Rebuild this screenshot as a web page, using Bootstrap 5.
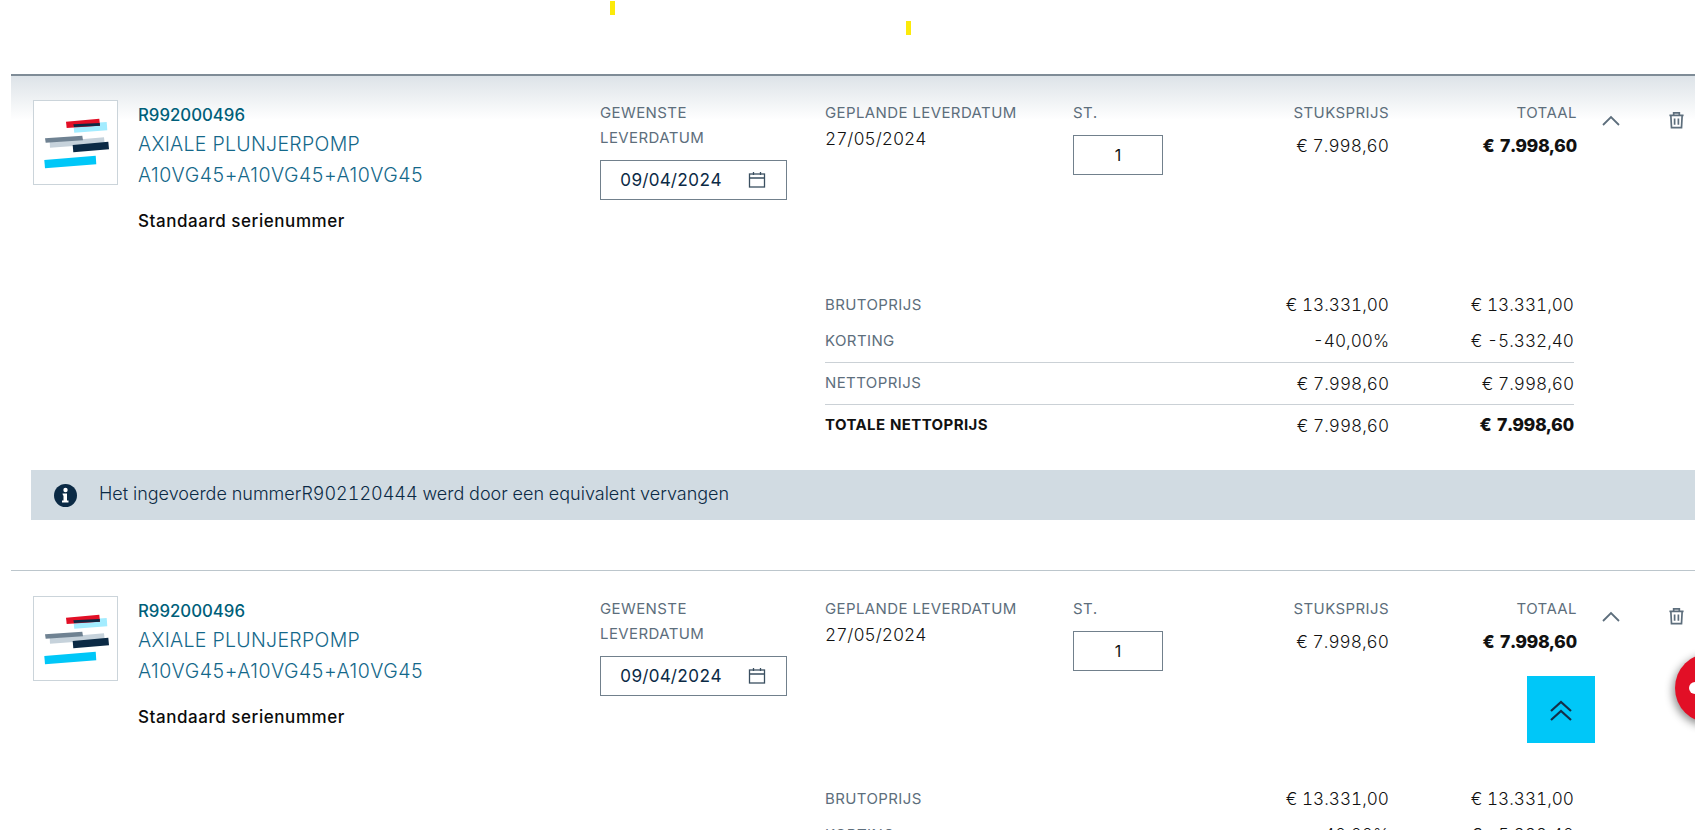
<!DOCTYPE html>
<html lang="nl">
<head>
<meta charset="utf-8">
<title>Winkelwagen</title>
<link href="https://cdn.jsdelivr.net/npm/bootstrap@5.3.0/dist/css/bootstrap.min.css" rel="stylesheet">
<style>
html,body{height:830px;overflow:hidden;background:#fff}
body{font-family:Inter,"Noto Sans",sans-serif;color:#111;font-size:16px;font-variant-numeric:tabular-nums}
.topstrip{height:74px;align-items:flex-start}
.ymark{width:5px;height:14px;background:#fcea0a;flex:none}
.ymark-a{margin-left:610px;margin-top:1px}
.ymark-b{margin-left:291px;margin-top:21px}
.order-item{margin-left:11px;height:496px;border-top:1px solid #bcc6cc}
.order-item.first{border-top:2px solid #7f8c97;background:linear-gradient(#dde3e8,#fff 44px) no-repeat}
.item-top{height:210px;padding-top:25px}
.order-item.first .item-top{height:211px;padding-top:24px}
.thumb{width:85px;height:85px;margin-left:22px;border:1px solid #cbd4da;background:#fff;flex:none}
.thumb svg{display:block;width:100%;height:100%}
.info-col{width:462px;margin-left:20px;flex:none;padding-top:2px}
.pnr{font-size:16.8px;font-weight:500;color:#005f7a;line-height:26px;font-variant-numeric:normal}
.pname{font-size:19.5px;font-weight:300;color:#14688a;line-height:30.500px;letter-spacing:.3px;margin-top:1px;font-variant-numeric:normal}
.pname + .pname{margin-top:0;letter-spacing:.55px}
.serial{font-size:17px;font-weight:500;color:#0b0b0b;line-height:24px;margin-top:19px;letter-spacing:.55px}
.lab{font-size:15px;color:#5d6e7c;line-height:25px;letter-spacing:.4px}
.date-col{width:225px;flex:none}
.date-box{width:187px;height:40px;margin-top:10px;border:1px solid #71808c;padding:0 19px;color:#0b2a45;font-size:17.2px}
.plan-col{width:248px;flex:none}
.val{font-size:17.3px;line-height:27px;color:#111;font-weight:300}
.val.fw-bold{font-weight:800!important;font-size:17.6px}
.qty-col{width:152px;flex:none}
.qty-input.form-control{width:90px;height:40px;margin-top:10px;border:1px solid #71808c;border-radius:0;padding:0;text-align:center;font-size:16px;color:#111;box-shadow:none}
.price-col{width:164px;flex:none}
.total-col{width:188px;flex:none}
.val-pad{margin-top:7px}
.act-up{width:34px;margin-left:24px;flex:none;padding-top:7px;color:#5d6e7c}
.act-del{width:34px;margin-left:33px;flex:none;padding-top:7px;color:#5d6e7c}
.sum-wrap{margin-left:814px;width:749px;font-size:17.2px;font-weight:300}
.sum-row{height:36px}
.sum-row.ruled{border-top:1px solid #cbd1d6;height:42px;margin-top:0}
.sum-row.short:nth-child(2){margin-bottom:3px}
.sum-label{font-size:15px;font-weight:400;color:#5d6e7c;flex:1;letter-spacing:.4px}
.sum-label.strong{font-weight:700;color:#111}
.sum-mid{width:250px;text-align:right}
.sum-end{width:185px;text-align:right}
.sum-end.strong{font-weight:800;font-size:17.6px}
.notice{margin:24px 0 0 20px;height:50px;background:#d1dbe2;color:#0b2a45;font-size:18px;font-weight:300;padding-left:23px;gap:22px}
.notice span{margin-bottom:3px}
.to-top{width:68px;height:67px;background:#00c7f8;right:100px;top:676px;color:#143049}
.to-top svg{margin-top:3px}
.fab{width:70px;height:70px;border-radius:50%;background:#e20f26;left:1675px;top:653px;box-shadow:-2px 3px 8px rgba(0,0,0,.45)}
.fab-dot{width:12px;height:12px;background:#fff;border-radius:50%;margin-left:14px}
</style>
</head>
<body>
<div class="d-flex topstrip"><span class="ymark ymark-a"></span><span class="ymark ymark-b"></span></div>

<section class="order-item first">
  <div class="d-flex item-top">
    <div class="thumb"><svg viewBox="0 0 83 83" aria-hidden="true">
      <polygon fill="#a3ecff" points="39.3,23.3 72.7,21 73.3,29.3 40.3,31.7"/>
      <polygon fill="#e20f26" points="32,20.7 65.3,17.7 66,24.7 32.7,27"/>
      <polygon fill="#0b2a45" points="39.3,23.3 65.7,22 66,24.7 40,26"/>
      <polygon fill="#c6d2db" points="15.7,41 70,36.3 70.7,42.7 16,46.7"/>
      <polygon fill="#6f8292" points="11,37.3 48.3,34.7 49,39.3 11.7,41.7"/>
      <polygon fill="#0b2a45" points="38.7,44 74.3,40.7 75,48.3 39.3,51.3"/>
      <polygon fill="#00c7f8" points="10.3,59 61.7,54.7 62.3,63.3 11,67.3"/>
    </svg></div>
    <div class="info-col">
      <div class="pnr">R992000496</div>
      <div class="pname">AXIALE PLUNJERPOMP</div>
      <div class="pname">A10VG45+A10VG45+A10VG45</div>
      <div class="serial">Standaard serienummer</div>
    </div>
    <div class="date-col">
      <div class="lab">GEWENSTE<br>LEVERDATUM</div>
      <div class="date-box d-flex align-items-center justify-content-between">09/04/2024
        <svg width="20" height="20" viewBox="0 0 20 20" fill="none" stroke="#3a4f60" stroke-width="1.3" aria-hidden="true"><rect x="2.5" y="4" width="15" height="13"/><path d="M2.5 8h15M6.5 2v3M13.5 2v3"/></svg>
      </div>
    </div>
    <div class="plan-col"><div class="lab">GEPLANDE LEVERDATUM</div><div class="val">27/05/2024</div></div>
    <div class="qty-col"><div class="lab">ST.</div><input class="form-control qty-input" value="1" aria-label="St."></div>
    <div class="price-col text-end"><div class="lab">STUKSPRIJS</div><div class="val val-pad">€ 7.998,60</div></div>
    <div class="total-col text-end"><div class="lab">TOTAAL</div><div class="val val-pad fw-bold">€ 7.998,60</div></div>
    <div class="act-up"><svg width="20" height="12" viewBox="0 0 20 12" fill="none" stroke="currentColor" stroke-width="1.8" aria-hidden="true"><path d="M2 10l8-8 8 8"/></svg></div>
    <div class="act-del"><svg width="17" height="19" viewBox="0 0 18 20" fill="none" stroke="currentColor" stroke-width="1.8" aria-hidden="true"><path d="M1.500 4.500h15M6 4.500V2h6v2.500M3 4.500l.7 13h10.600l.7-13M7 8v6.500M11 8v6.500"/></svg></div>
  </div>
  <div class="sum-wrap">
    <div class="d-flex align-items-center sum-row short"><span class="sum-label">BRUTOPRIJS</span><span class="sum-mid">€ 13.331,00</span><span class="sum-end">€ 13.331,00</span></div>
    <div class="d-flex align-items-center sum-row short"><span class="sum-label">KORTING</span><span class="sum-mid">-40,00%</span><span class="sum-end">€ -5.332,40</span></div>
    <div class="d-flex align-items-center sum-row ruled"><span class="sum-label">NETTOPRIJS</span><span class="sum-mid">€ 7.998,60</span><span class="sum-end">€ 7.998,60</span></div>
    <div class="d-flex align-items-center sum-row ruled"><span class="sum-label strong">TOTALE NETTOPRIJS</span><span class="sum-mid">€ 7.998,60</span><span class="sum-end strong">€ 7.998,60</span></div>
  </div>
  <div class="notice d-flex align-items-center">
    <svg width="23" height="23" viewBox="0 0 23 23" aria-hidden="true"><circle cx="11.500" cy="11.500" r="11.500" fill="#0b2a45"/><circle cx="11.500" cy="6" r="2.200" fill="#fff"/><path fill="#fff" d="M8.500 9.500h4.500v7h1.500v2h-6.500v-2h1.500v-5h-.5z"/></svg>
    <span>Het ingevoerde nummerR902120444 werd door een equivalent vervangen</span>
  </div>
</section>

<section class="order-item">
  <div class="d-flex item-top">
    <div class="thumb"><svg viewBox="0 0 83 83" aria-hidden="true">
      <polygon fill="#a3ecff" points="39.3,23.3 72.7,21 73.3,29.3 40.3,31.7"/>
      <polygon fill="#e20f26" points="32,20.7 65.3,17.7 66,24.7 32.7,27"/>
      <polygon fill="#0b2a45" points="39.3,23.3 65.7,22 66,24.7 40,26"/>
      <polygon fill="#c6d2db" points="15.7,41 70,36.3 70.7,42.7 16,46.7"/>
      <polygon fill="#6f8292" points="11,37.3 48.3,34.7 49,39.3 11.7,41.7"/>
      <polygon fill="#0b2a45" points="38.7,44 74.3,40.7 75,48.3 39.3,51.3"/>
      <polygon fill="#00c7f8" points="10.3,59 61.7,54.7 62.3,63.3 11,67.3"/>
    </svg></div>
    <div class="info-col">
      <div class="pnr">R992000496</div>
      <div class="pname">AXIALE PLUNJERPOMP</div>
      <div class="pname">A10VG45+A10VG45+A10VG45</div>
      <div class="serial">Standaard serienummer</div>
    </div>
    <div class="date-col">
      <div class="lab">GEWENSTE<br>LEVERDATUM</div>
      <div class="date-box d-flex align-items-center justify-content-between">09/04/2024
        <svg width="20" height="20" viewBox="0 0 20 20" fill="none" stroke="#3a4f60" stroke-width="1.3" aria-hidden="true"><rect x="2.5" y="4" width="15" height="13"/><path d="M2.5 8h15M6.5 2v3M13.5 2v3"/></svg>
      </div>
    </div>
    <div class="plan-col"><div class="lab">GEPLANDE LEVERDATUM</div><div class="val">27/05/2024</div></div>
    <div class="qty-col"><div class="lab">ST.</div><input class="form-control qty-input" value="1" aria-label="St."></div>
    <div class="price-col text-end"><div class="lab">STUKSPRIJS</div><div class="val val-pad">€ 7.998,60</div></div>
    <div class="total-col text-end"><div class="lab">TOTAAL</div><div class="val val-pad fw-bold">€ 7.998,60</div></div>
    <div class="act-up"><svg width="20" height="12" viewBox="0 0 20 12" fill="none" stroke="currentColor" stroke-width="1.8" aria-hidden="true"><path d="M2 10l8-8 8 8"/></svg></div>
    <div class="act-del"><svg width="17" height="19" viewBox="0 0 18 20" fill="none" stroke="currentColor" stroke-width="1.8" aria-hidden="true"><path d="M1.500 4.500h15M6 4.500V2h6v2.500M3 4.500l.7 13h10.600l.7-13M7 8v6.500M11 8v6.500"/></svg></div>
  </div>
  <div class="sum-wrap">
    <div class="d-flex align-items-center sum-row short"><span class="sum-label">BRUTOPRIJS</span><span class="sum-mid">€ 13.331,00</span><span class="sum-end">€ 13.331,00</span></div>
    <div class="d-flex align-items-center sum-row short"><span class="sum-label">KORTING</span><span class="sum-mid">-40,00%</span><span class="sum-end">€ -5.332,40</span></div>
  </div>
</section>

<div class="position-fixed to-top d-flex align-items-center justify-content-center">
  <svg width="24" height="22" viewBox="0 0 24 22" fill="none" stroke="currentColor" stroke-width="2.200" aria-hidden="true"><path d="M2 11l10-9 10 9M2 20l10-9 10 9"/></svg>
</div>
<div class="position-fixed fab d-flex align-items-center"><span class="fab-dot"></span></div>
<script src="https://cdn.jsdelivr.net/npm/bootstrap@5.3.0/dist/js/bootstrap.bundle.min.js"></script>
</body>
</html>
